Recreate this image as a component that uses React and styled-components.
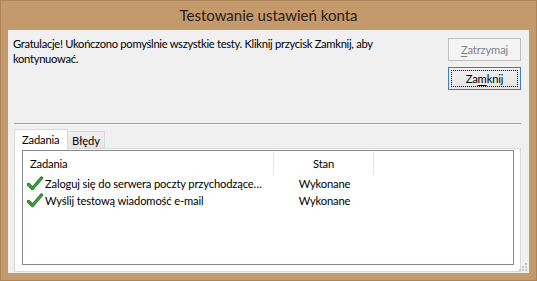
import React from 'react';
import styled, { createGlobalStyle, css } from 'styled-components';

const Global = createGlobalStyle`
  html, body { margin: 0; padding: 0; background: #c4996c; }
  body { font-family: Lato, "Noto Sans", sans-serif; }
`;

const Window = styled.div`
  width: 537px;
  height: 281px;
  box-sizing: border-box;
  background: #c4996c;
  border: 1px solid #ad8358;
  display: flex;
  flex-direction: column;
  padding: 0 7px 7px 7px;
`;

const TitleBar = styled.div`
  height: 29px;
  display: flex;
  align-items: center;
  justify-content: center;
  font-size: 15px;
  color: #2a2018;
  padding-bottom: 1px;
  box-sizing: border-box;
`;

const Client = styled.div`
  flex: 1;
  background: #f0f0f0;
  display: flex;
  flex-direction: column;
  padding: 0 8px 1px 0;
  position: relative;
  font-size: 11.2px;
  letter-spacing: -0.15px;
  color: #000;
`;

const TopRow = styled.div`
  height: 93px;
  display: flex;
  justify-content: space-between;
  padding-left: 5px;
`;

const Message = styled.div`
  padding-top: 6px;
  line-height: 15px;
  width: 380px;
  letter-spacing: -0.3px;
`;

const ButtonColumn = styled.div`
  padding-top: 8px;
  display: flex;
  flex-direction: column;
  gap: 6px;
`;

const Button = styled.div`
  width: 73px;
  height: 23px;
  box-sizing: border-box;
  border: 1px solid #acacac;
  background: linear-gradient(#f0f0f0, #e5e5e5);
  display: flex;
  align-items: center;
  justify-content: center;
  position: relative;
  color: #000;
  u { text-decoration: underline; text-underline-offset: 2px; }
  ${(p) => p.$disabled && css`
    border-color: #bfbfbf;
    background: #f4f4f4;
    color: #838383;
  `}
  ${(p) => p.$default && css`
    border-color: #3c7fb1;
    &::after {
      content: '';
      position: absolute;
      inset: 2px;
      border: 1px dotted #000;
    }
  `}
`;

const Separator = styled.div`
  margin-left: 6px;
  height: 0;
  border-top: 1px solid #a0a0a0;
  border-bottom: 1px solid #ffffff;
`;

const TabArea = styled.div`
  margin: 4px 0 0 6px;
  flex: 1;
  display: flex;
  flex-direction: column;
`;

const TabStrip = styled.div`
  display: flex;
  align-items: flex-end;
  height: 19px;
  position: relative;
  z-index: 1;
`;

const Tab = styled.div`
  box-sizing: border-box;
  border: 1px solid #d9d9d9;
  display: flex;
  align-items: center;
  ${(p) => p.$active ? css`
    height: 21px;
    width: 54px;
    padding: 0 0 2px 7px;
    margin-bottom: -2px;
    background: #fff;
    border-bottom: none;
  ` : css`
    height: 17px;
    width: 38px;
    margin-left: -1px;
    padding-left: 4px;
    background: linear-gradient(#f0f0f0, #e5e5e5);
    border-bottom: none;
  `}
`;

const Panel = styled.div`
  flex: 1;
  box-sizing: border-box;
  border: 1px solid #d9d9d9;
  background: #fff;
  padding: 1px 6px 6px 7px;
  display: flex;
`;

const ListView = styled.div`
  flex: 1;
  border: 1px solid #828790;
  background: #fff;
  display: flex;
  flex-direction: column;
`;

const Header = styled.div`
  height: 24px;
  display: grid;
  grid-template-columns: 251px 100px 1fr;
`;

const HeaderCell = styled.div`
  border-right: 1px solid #e5e5e5;
  display: flex;
  align-items: center;
  justify-content: ${(p) => (p.$center ? 'center' : 'flex-start')};
  padding-left: ${(p) => (p.$center ? '0' : '7px')};
  ${(p) => p.$last && css`border-right: none;`}
`;

const Row = styled.div`
  height: 17px;
  display: grid;
  grid-template-columns: 251px 100px 1fr;
  align-items: center;
`;

const TaskCell = styled.div`
  display: flex;
  align-items: center;
  padding-left: 4px;
  gap: 2px;
  white-space: nowrap;
  overflow: hidden;
  svg { flex-shrink: 0; }
`;

const StatusCell = styled.div`
  text-align: center;
  padding-left: 1px;
`;

const Grip = styled.svg`
  position: absolute;
  right: 1px;
  bottom: 1px;
`;

const Check = () => (
  <svg width="16" height="15" viewBox="0 0 16 15">
    <path d="M1.5 8.5 L5.5 12.5 L14.5 2" fill="none" stroke="#1f6e1f" strokeWidth="3.2" strokeLinecap="round" strokeLinejoin="round" />
    <path d="M1.5 8.5 L5.5 12.5 L14.5 2" fill="none" stroke="#3faa3f" strokeWidth="1.6" strokeLinecap="round" strokeLinejoin="round" />
  </svg>
);

const tasks = [
  { name: 'Zaloguj się do serwera poczty przychodzące…', status: 'Wykonane' },
  { name: 'Wyślij testową wiadomość e-mail', status: 'Wykonane' },
];

export default function App() {
  return (
    <>
      <Global />
      <Window>
        <TitleBar>Testowanie ustawień konta</TitleBar>
        <Client>
          <TopRow>
            <Message>
              Gratulacje! Ukończono pomyślnie wszystkie testy. Kliknij przycisk Zamknij, aby kontynuować.
            </Message>
            <ButtonColumn>
              <Button $disabled><span><u>Z</u>atrzymaj</span></Button>
              <Button $default><span>Za<u>m</u>knij</span></Button>
            </ButtonColumn>
          </TopRow>
          <Separator />
          <TabArea>
            <TabStrip>
              <Tab $active>Zadania</Tab>
              <Tab>Błędy</Tab>
            </TabStrip>
            <Panel>
              <ListView>
                <Header>
                  <HeaderCell>Zadania</HeaderCell>
                  <HeaderCell $center>Stan</HeaderCell>
                  <HeaderCell $last />
                </Header>
                {tasks.map((t) => (
                  <Row key={t.name}>
                    <TaskCell><Check />{t.name}</TaskCell>
                    <StatusCell>{t.status}</StatusCell>
                    <div />
                  </Row>
                ))}
              </ListView>
            </Panel>
          </TabArea>
          <Grip width="10" height="10" viewBox="0 0 10 10">
            <g fill="#c8c8c8">
              <rect x="7" y="1" width="2" height="2" />
              <rect x="4" y="4" width="2" height="2" />
              <rect x="7" y="4" width="2" height="2" />
              <rect x="1" y="7" width="2" height="2" />
              <rect x="4" y="7" width="2" height="2" />
              <rect x="7" y="7" width="2" height="2" />
            </g>
          </Grip>
        </Client>
      </Window>
    </>
  );
}
